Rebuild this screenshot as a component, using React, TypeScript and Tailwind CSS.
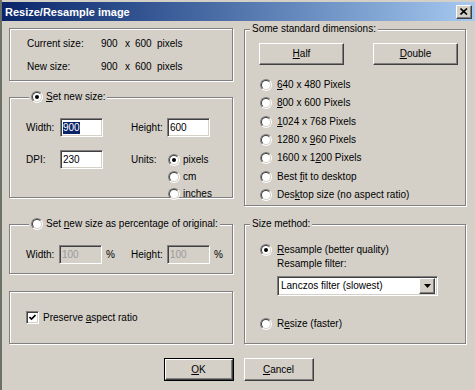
import React from 'react';

// classic 3D edges
const sunken =
  'border border-t-[#808080] border-l-[#808080] border-r-white border-b-white shadow-[inset_1px_1px_0_#404040,inset_-1px_-1px_0_#d4d0c8]';
const raised =
  'border border-t-white border-l-white border-r-[#404040] border-b-[#404040] shadow-[inset_-1px_-1px_0_#808080]';

function U({ children }: { children: React.ReactNode }) {
  return <span className="underline underline-offset-[1px]">{children}</span>;
}

function Radio({ checked }: { checked?: boolean }) {
  return (
    <span className="inline-flex w-[12px] h-[12px] shrink-0 rounded-full border border-t-[#808080] border-l-[#808080] border-r-white border-b-white">
      <span className="flex flex-1 items-center justify-center rounded-full border border-t-[#404040] border-l-[#404040] border-r-[#d4d0c8] border-b-[#d4d0c8] bg-white">
        {checked && <span className="w-[4px] h-[4px] rounded-full bg-black" />}
      </span>
    </span>
  );
}

function Checkbox() {
  return (
    <span className={`flex w-[13px] h-[13px] shrink-0 items-center justify-center bg-white ${sunken}`}>
      <svg width="7" height="7" viewBox="0 0 7 7">
        <polyline points="0.5,3 2.5,5 6.5,1" fill="none" stroke="black" strokeWidth="1.7" />
      </svg>
    </span>
  );
}

function TextBox({ value, disabled, selected }: { value: string; disabled?: boolean; selected?: boolean }) {
  return (
    <div
      className={`flex w-[43px] h-[19px] shrink-0 items-center pl-[2px] ${sunken} ${
        disabled ? 'bg-[#d4d0c8] text-[#9a9a9a]' : 'bg-white'
      }`}
    >
      {selected ? <span className="bg-[#0a246a] text-white">{value}</span> : value}
    </div>
  );
}

function Button({ children, className = '' }: { children: React.ReactNode; className?: string }) {
  return <div className={`flex items-center justify-center bg-[#d4d0c8] ${raised} ${className}`}>{children}</div>;
}

function Legend({ children, left }: { children: React.ReactNode; left: string }) {
  return (
    <div className={`absolute -top-[7px] ${left} flex h-[12px] items-center gap-[3px] bg-[#d4d0c8] px-[2px]`}>
      {children}
    </div>
  );
}

function Group({ className = '', children }: { className?: string; children: React.ReactNode }) {
  return (
    <div className={`relative border border-[#808080] shadow-[inset_1px_1px_0_#fff,1px_1px_0_#fff] ${className}`}>
      {children}
    </div>
  );
}

function RadioRow({ checked, children, className = 'h-[17px]' }: { checked?: boolean; children: React.ReactNode; className?: string }) {
  return (
    <div className={`flex items-center gap-[5px] ${className}`}>
      <Radio checked={checked} />
      <span>{children}</span>
    </div>
  );
}

export default function App() {
  return (
    <div className="w-[475px] h-[390px] overflow-hidden bg-[#d4d0c8] border-l-2 border-l-[#6b7166] flex flex-col font-['Liberation_Sans',Arial,sans-serif] text-[10px] leading-[12px] text-black">
      {/* title bar */}
      <div className="mt-[2px] h-[19px] shrink-0 flex items-center justify-between bg-gradient-to-r from-[#0a246a] to-[#a6caf0] pl-[3px]">
        <span className="text-[11px] font-bold text-white">Resize/Resample image</span>
        <div className={`mr-[3px] flex w-[16px] h-[14px] items-center justify-center bg-[#d4d0c8] ${raised}`}>
          <svg width="8" height="7" viewBox="0 0 8 7">
            <path d="M0.5 0.5 L7 6.5 M7 0.5 L0.5 6.5" stroke="black" strokeWidth="1.6" />
          </svg>
        </div>
      </div>

      <div className="flex gap-[11px] pl-[7px] pt-[7px]">
        {/* left column */}
        <div className="flex w-[224px] flex-col">
          <Group className="h-[53px] pl-[17px] pt-[9px] flex flex-col gap-[11px]">
            <div className="flex h-[12px] items-center">
              <span className="w-[74px]">Current size:</span>
              <span className="w-[24px]">900</span>
              <span className="w-[10px]">x</span>
              <span className="w-[22px]">600</span>
              <span>pixels</span>
            </div>
            <div className="flex h-[12px] items-center">
              <span className="w-[74px]">New size:</span>
              <span className="w-[24px]">900</span>
              <span className="w-[10px]">x</span>
              <span className="w-[22px]">600</span>
              <span>pixels</span>
            </div>
          </Group>

          <Group className="mt-[16px] h-[101px] pl-[16px] pt-[20px]">
            <Legend left="left-[19px]">
              <Radio checked />
              <span>
                <U>S</U>et new size:
              </span>
            </Legend>
            <div className="flex h-[19px] items-center">
              <span className="w-[34px]">Width:</span>
              <TextBox value="900" selected />
              <span className="w-[28px]" />
              <span className="w-[36px]">Height:</span>
              <TextBox value="600" />
            </div>
            <div className="mt-[13px] flex items-start">
              <div className="flex h-[19px] items-center">
                <span className="w-[34px]">DPI:</span>
                <TextBox value="230" />
              </div>
              <span className="w-[28px]" />
              <span className="flex h-[19px] w-[37px] items-center">Units:</span>
              <div className="flex flex-col pt-[1px]">
                <div className="flex h-[17px] items-center gap-[3px]">
                  <Radio checked />
                  <span>pixels</span>
                </div>
                <div className="flex h-[17px] items-center gap-[3px]">
                  <Radio />
                  <span>cm</span>
                </div>
                <div className="flex h-[17px] items-center gap-[3px]">
                  <Radio />
                  <span>inches</span>
                </div>
              </div>
            </div>
          </Group>

          <Group className="mt-[26px] h-[50px] pl-[16px] pt-[20px]">
            <Legend left="left-[19px]">
              <Radio />
              <span>
                Set <U>n</U>ew size as percentage of original:
              </span>
            </Legend>
            <div className="flex h-[19px] items-center">
              <span className="w-[33px]">Width:</span>
              <TextBox value="100" disabled />
              <span className="w-[29px] pl-[4px]">%</span>
              <span className="w-[36px]">Height:</span>
              <TextBox value="100" disabled />
              <span className="pl-[4px]">%</span>
            </div>
          </Group>

          <Group className="mt-[17px] h-[53px] pl-[16px] flex items-center gap-[4px]">
            <Checkbox />
            <span>
              Preserve <U>a</U>spect ratio
            </span>
          </Group>
        </div>

        {/* right column */}
        <div className="flex w-[222px] flex-col">
          <Group className="mt-[1px] h-[177px] pt-[13px]">
            <Legend left="left-[5px]">
              <span>Some standard dimensions:</span>
            </Legend>
            <div className="flex gap-[29px] pl-[14px]">
              <Button className="w-[85px] h-[22px]">
                <span>
                  <U>H</U>alf
                </span>
              </Button>
              <Button className="w-[85px] h-[22px]">
                <span>
                  <U>D</U>ouble
                </span>
              </Button>
            </div>
            <div className="mt-[11px] flex flex-col pl-[15px]">
              <RadioRow className="h-[18.3px]">
                <U>6</U>40 x 480 Pixels
              </RadioRow>
              <RadioRow className="h-[18.3px]">
                <U>8</U>00 x 600 Pixels
              </RadioRow>
              <RadioRow className="h-[18.3px]">
                <U>1</U>024 x 768 Pixels
              </RadioRow>
              <RadioRow className="h-[18.3px]">
                1280 x <U>9</U>60 Pixels
              </RadioRow>
              <RadioRow className="h-[18.3px]">
                1600 x 1<U>2</U>00 Pixels
              </RadioRow>
              <RadioRow className="h-[18.3px]">
                Best <U>f</U>it to desktop
              </RadioRow>
              <RadioRow className="h-[18.3px]">
                Des<U>k</U>top size (no aspect ratio)
              </RadioRow>
            </div>
          </Group>

          <Group className="mt-[18px] h-[120px] pt-[16px] pl-[15px]">
            <Legend left="left-[5px]">
              <span>Size method:</span>
            </Legend>
            <RadioRow checked>
              <U>R</U>esample (better quality)
            </RadioRow>
            <div className="flex h-[12px] items-center pl-[17px]">Resample filter:</div>
            <div className={`ml-[17px] mt-[6px] flex w-[161px] h-[20px] items-center justify-between bg-white pl-[3px] pr-[2px] ${sunken}`}>
              <span>Lanczos filter (slowest)</span>
              <div className={`flex w-[16px] h-[16px] items-center justify-center bg-[#d4d0c8] ${raised}`}>
                <svg width="7" height="4" viewBox="0 0 7 4">
                  <path d="M0 0 H7 L3.5 4 Z" fill="black" />
                </svg>
              </div>
            </div>
            <RadioRow className="mt-[19px] h-[17px]">
              R<U>e</U>size (faster)
            </RadioRow>
          </Group>
        </div>
      </div>

      {/* dialog buttons */}
      <div className="mt-[14px] flex justify-center gap-[10px]">
        <div className="w-[70px] h-[23px] border border-black flex">
          <Button className="flex-1">
            <span>
              <U>O</U>K
            </span>
          </Button>
        </div>
        <Button className="w-[70px] h-[23px]">
          <span>
            <U>C</U>ancel
          </span>
        </Button>
      </div>
    </div>
  );
}
